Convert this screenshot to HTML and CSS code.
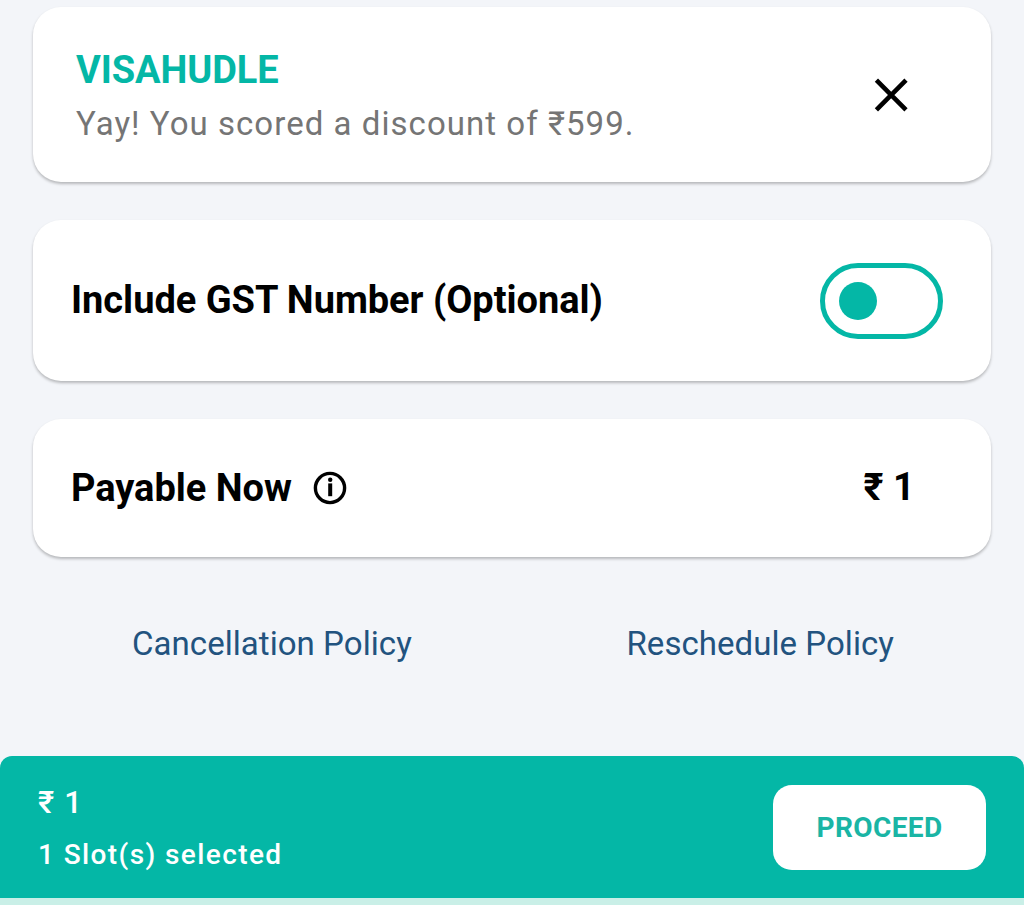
FILE: index.html
```html
<!DOCTYPE html>
<html lang="en">
<head>
<meta charset="utf-8">
<title>Payment summary</title>
<link rel="stylesheet" href="styles.css">
</head>
<body>
<main class="content">
  <section class="card coupon">
    <div>
      <h2 class="code">VISAHUDLE</h2>
      <p class="saving">Yay! You scored a discount of ₹599.</p>
    </div>
    <button class="close" aria-label="Remove coupon"><svg width="36" height="36" viewBox="0 0 36 36"><path d="M3.4 3.2 33 32.8M33 3.2 3.4 32.8" fill="none" stroke="#000" stroke-width="4.6"/></svg></button>
  </section>
  <section class="card gst">
    <h2 class="label gst-label">Include GST Number (Optional)</h2>
    <button class="toggle" aria-label="Include GST number"><span class="knob"></span></button>
  </section>
  <section class="card payable">
    <h2 class="label pay-label">Payable Now</h2>
    <svg class="info" width="34" height="34" viewBox="0 0 34 34"><circle cx="17" cy="17" r="14.6" fill="none" stroke="#000" stroke-width="3.4"/><circle cx="17.2" cy="8.8" r="2.2"/><path d="M17.2 12.4v12.8" stroke="#000" stroke-width="4"/></svg>
    <strong class="amount">₹ 1</strong>
  </section>
  <nav class="links"><a class="cancel">Cancellation Policy</a><a class="reschedule">Reschedule Policy</a></nav>
</main>
<footer class="bar">
  <div class="summary"><p class="total">₹ 1</p><p class="slots">1 Slot(s) selected</p></div>
  <button class="proceed">PROCEED</button>
</footer>
</body>
</html>
```
FILE: styles.css
```css
* { box-sizing: border-box; }
body { margin: 0; height: 905px; overflow: hidden; display: flex; flex-direction: column; background: #f3f5f9; font-family: Roboto, "Noto Sans", sans-serif; color: #000; }
h2, p { margin: 0; white-space: nowrap; }
button { border: 0; padding: 0; background: none; font-family: inherit; }
svg { display: block; }
.content { flex: 1; padding: 7px 33px 0; }
.card { display: flex; align-items: center; background: #fff; border-radius: 28px; box-shadow: 0 2px 3px rgba(0, 0, 0, .25); }
.coupon { height: 175px; padding: 0 82px 0 43px; justify-content: space-between; }
.code { padding-top: 5px; color: #04b7a6; font-size: 38px; line-height: 48px; font-weight: 700; letter-spacing: -.1px; }
.saving { margin-top: 6px; color: #757575; font-size: 33px; line-height: 48px; letter-spacing: 1.04px; }
.gst { height: 161px; margin-top: 38px; padding: 0 48px 0 38px; justify-content: space-between; }
.label { font-size: 38px; line-height: 48px; font-weight: 700; letter-spacing: -.03px; }
.gst-label { padding-bottom: 2px; }
.toggle { width: 123px; height: 76px; padding-left: 14px; border: 5px solid #04b7a6; border-radius: 38px; display: flex; align-items: center; }
.knob { width: 38px; height: 38px; border-radius: 50%; background: #04b7a6; }
.payable { height: 138px; margin-top: 38px; padding: 0 76px 0 38px; }
.info { margin: 0 0 1px 21px; }
.amount { margin-left: auto; padding-bottom: 3px; font-size: 38px; letter-spacing: .1px; }
.links { display: flex; justify-content: space-between; padding: 64px 97px 0 99px; color: #22537f; font-size: 33px; line-height: 46px; letter-spacing: .05px; }
.bar { height: 149px; padding: 0 38px; display: flex; align-items: center; justify-content: space-between; background: #04b7a6; border-bottom: 7px solid #c9efe7; border-radius: 12px 12px 0 0; color: #fff; }
.summary { padding-top: 3px; }
.total { font-size: 31px; line-height: 40px; font-weight: 500; letter-spacing: 1.2px; }
.slots { margin-top: 12px; font-size: 28px; line-height: 40px; font-weight: 500; letter-spacing: 1.4px; }
.proceed { width: 213px; height: 85px; border-radius: 19px; background: #fff; color: #1ab5a5; font-size: 28px; font-weight: 700; letter-spacing: .4px; }
```
